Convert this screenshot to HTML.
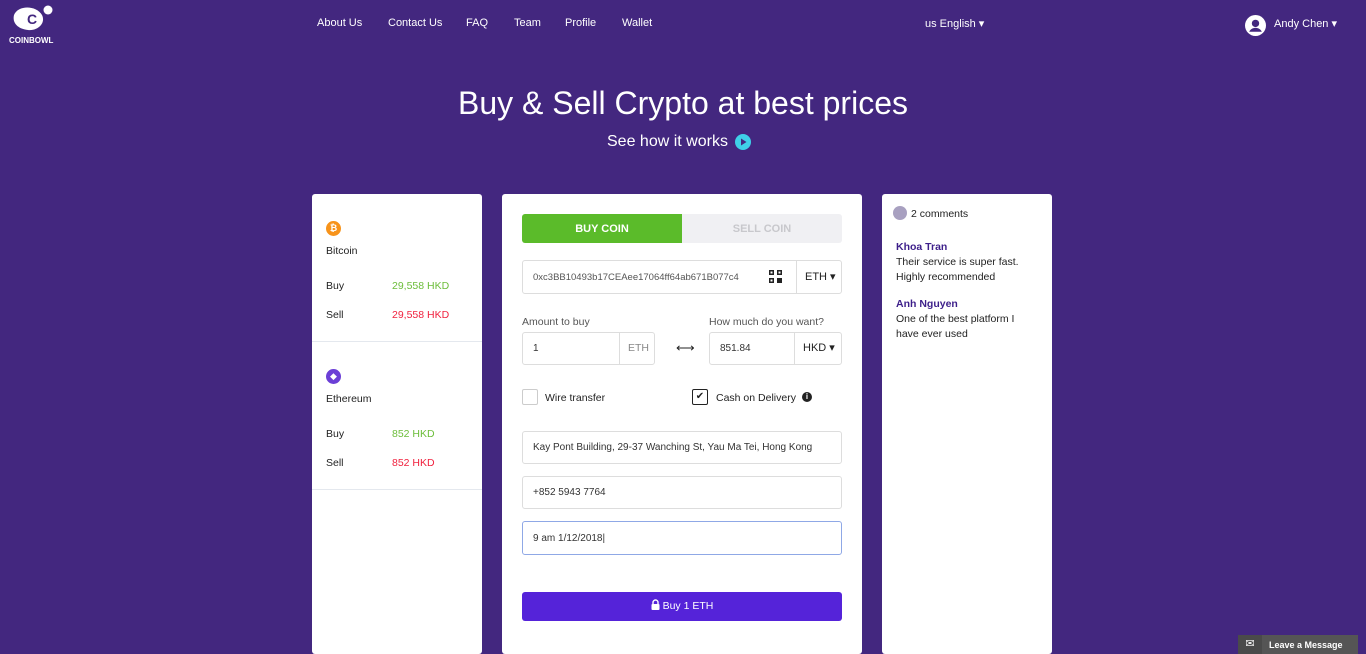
<!DOCTYPE html>
<html><head><meta charset="utf-8"><style>
*{box-sizing:border-box;margin:0;padding:0}
body{width:1366px;height:654px;overflow:hidden;background:#43277f;font-family:"Liberation Sans",sans-serif;position:relative;color:#222}
.a{position:absolute}
.nav a{position:absolute;top:17px;color:#fff;font-size:11px;text-decoration:none}
.card{position:absolute;background:#fff;border-radius:3px}
.inp{position:absolute;border:1px solid #ddd;border-radius:3px;font-size:10px;color:#333;display:flex;align-items:center;padding-left:10px;background:#fff}
.sm{font-size:10.5px}
</style></head><body>
<svg class="a" style="left:12px;top:3px" width="42" height="30" viewBox="0 0 42 30"><path d="M2 12 C6 2 24 2 30 12 C34 20 26 28 16 27 C6 26 0 20 2 12Z" fill="#fff"/><circle cx="36" cy="7" r="4.5" fill="#fff"/><text x="15" y="21" font-size="14" font-weight="bold" fill="#43277f" font-family="Liberation Sans">C</text></svg>
<div class="a" style="left:9px;top:36px;color:#fff;font-size:8px;font-weight:bold">COINBOWL</div>
<div class="nav"><a style="left:317px">About Us</a><a style="left:388px">Contact Us</a><a style="left:466px">FAQ</a><a style="left:514px">Team</a><a style="left:565px">Profile</a><a style="left:622px">Wallet</a><a style="left:925px">us English ▾</a><a style="left:1274px">Andy Chen ▾</a></div>
<svg class="a" style="left:1245px;top:15px" width="21" height="21" viewBox="0 0 20 20"><circle cx="10" cy="10" r="10" fill="#fff"/><circle cx="10" cy="8" r="3.5" fill="#43277f"/><path d="M4 16 C6 11 14 11 16 16" fill="#43277f"/></svg>
<div class="a" style="left:0;width:1366px;top:85px;text-align:center;color:#fff;font-size:32px">Buy &amp; Sell Crypto at best prices</div>
<div class="a" style="left:607px;top:133px;color:#fff;font-size:16px">See how it works</div>
<svg class="a" style="left:735px;top:134px" width="16" height="16"><circle cx="8" cy="8" r="8" fill="#3fd0e8"/><path d="M6 4.5 L11.5 8 L6 11.5Z" fill="#43277f"/></svg>

<div class="card" style="left:312px;top:194px;width:170px;height:460px">
<div class="a" style="left:14px;top:27px;width:15px;height:15px;border-radius:50%;background:#f7931a;color:#fff;font-size:9px;font-weight:bold;text-align:center;line-height:15px">₿</div>
<div class="a sm" style="left:14px;top:51px">Bitcoin</div>
<div class="a sm" style="left:14px;top:86px">Buy</div><div class="a sm" style="left:80px;top:86px;color:#6cbd3a">29,558 HKD</div>
<div class="a sm" style="left:14px;top:115px">Sell</div><div class="a sm" style="left:80px;top:115px;color:#f0213e">29,558 HKD</div>
<div class="a" style="left:0;top:147px;width:170px;border-top:1px solid #e4e8ee"></div>
<div class="a" style="left:14px;top:175px;width:15px;height:15px;border-radius:50%;background:#6b3fd6;color:#fff;font-size:9px;text-align:center;line-height:15px">◆</div>
<div class="a sm" style="left:14px;top:199px">Ethereum</div>
<div class="a sm" style="left:14px;top:234px">Buy</div><div class="a sm" style="left:80px;top:234px;color:#6cbd3a">852 HKD</div>
<div class="a sm" style="left:14px;top:263px">Sell</div><div class="a sm" style="left:80px;top:263px;color:#f0213e">852 HKD</div>
<div class="a" style="left:0;top:295px;width:170px;border-top:1px solid #e4e8ee"></div>
</div>

<div class="card" style="left:502px;top:194px;width:360px;height:460px"></div>
<div class="a" style="left:522px;top:214px;width:160px;height:29px;background:#5bbb2a;color:#fff;font-size:11px;font-weight:bold;text-align:center;line-height:30px;border-radius:3px 0 0 3px">BUY COIN</div>
<div class="a" style="left:682px;top:214px;width:160px;height:29px;background:#f0f0f3;color:#c8c8cc;font-size:11px;font-weight:bold;text-align:center;line-height:30px;border-radius:0 3px 3px 0">SELL COIN</div>
<div class="inp" style="left:522px;top:260px;width:320px;height:34px;font-size:9.5px;color:#555">0xc3BB10493b17CEAee17064ff64ab671B077c4</div>
<div class="a" style="left:796px;top:261px;height:32px;border-left:1px solid #ddd;width:45px;font-size:11px;line-height:32px;padding-left:8px">ETH ▾</div>
<svg class="a" style="left:769px;top:270px" width="13" height="13"><rect x="0" y="0" width="5" height="5" fill="#222"/><rect x="8" y="0" width="5" height="5" fill="#222"/><rect x="0" y="8" width="5" height="5" fill="#222"/><rect x="8" y="8" width="5" height="5" fill="#222"/><rect x="1.5" y="1.5" width="2" height="2" fill="#fff"/><rect x="9.5" y="1.5" width="2" height="2" fill="#fff"/><rect x="1.5" y="9.5" width="2" height="2" fill="#fff"/></svg>
<div class="a sm" style="left:522px;top:316px;color:#555">Amount to buy</div>
<div class="a sm" style="left:709px;top:316px;color:#555">How much do you want?</div>
<div class="inp" style="left:522px;top:332px;width:133px;height:33px">1</div>
<div class="a" style="left:619px;top:333px;height:31px;border-left:1px solid #ddd;width:35px;font-size:10.5px;line-height:31px;padding-left:8px;color:#888">ETH</div>
<div class="a" style="left:676px;top:340px;font-size:13px">⟷</div>
<div class="inp" style="left:709px;top:332px;width:133px;height:33px">851.84</div>
<div class="a" style="left:794px;top:333px;height:31px;border-left:1px solid #ddd;width:47px;font-size:11px;line-height:31px;padding-left:8px">HKD ▾</div>
<div class="a" style="left:522px;top:389px;width:16px;height:16px;border:1px solid #ccc;border-radius:2px"></div>
<div class="a sm" style="left:545px;top:392px">Wire transfer</div>
<div class="a" style="left:692px;top:389px;width:16px;height:16px;border:1px solid #222;border-radius:2px;font-size:10px;text-align:center;line-height:14px">✔</div>
<div class="a sm" style="left:716px;top:392px">Cash on Delivery</div>
<div class="a" style="left:802px;top:392px;width:10px;height:10px;border-radius:50%;background:#222;color:#fff;font-size:8px;text-align:center;line-height:10px;font-weight:bold">i</div>
<div class="inp" style="left:522px;top:431px;width:320px;height:33px">Kay Pont Building, 29-37 Wanching St, Yau Ma Tei, Hong Kong</div>
<div class="inp" style="left:522px;top:476px;width:320px;height:33px">+852 5943 7764</div>
<div class="inp" style="left:522px;top:521px;width:320px;height:34px;border-color:#8fa8e6">9 am 1/12/2018|</div>
<div class="a" style="left:522px;top:592px;width:320px;height:29px;background:#5523d9;color:#fff;font-size:10.5px;text-align:center;line-height:29px;border-radius:3px"><svg width="9" height="11" viewBox="0 0 9 11" style="vertical-align:-1px"><path d="M2 5V3.5a2.5 2.5 0 0 1 5 0V5" stroke="#fff" stroke-width="1.4" fill="none"/><rect x="0.5" y="5" width="8" height="6" rx="1" fill="#fff"/></svg> Buy 1 ETH</div>

<div class="card" style="left:882px;top:194px;width:170px;height:460px">
<div class="a" style="left:11px;top:12px;width:14px;height:14px;border-radius:50%;background:#a8a0c0"></div>
<div class="a sm" style="left:29px;top:14px">2 comments</div>
<div class="a sm" style="left:14px;top:47px;color:#3d1f8a;font-weight:bold">Khoa Tran</div>
<div class="a sm" style="left:14px;top:61px;line-height:15px;width:150px">Their service is super fast.<br>Highly recommended</div>
<div class="a sm" style="left:14px;top:104px;color:#3d1f8a;font-weight:bold">Anh Nguyen</div>
<div class="a sm" style="left:14px;top:118px;line-height:15px;width:150px">One of the best platform I<br>have ever used</div>
</div>
<div class="a" style="left:1238px;top:635px;width:120px;height:19px;background:#555;"></div>
<div class="a" style="left:1238px;top:635px;width:24px;height:19px;background:#4a4a4a;color:#fff;font-size:11px;text-align:center;line-height:19px">✉</div>
<div class="a" style="left:1269px;top:640px;color:#fff;font-size:9px;font-weight:bold">Leave a Message</div>
</body></html>
